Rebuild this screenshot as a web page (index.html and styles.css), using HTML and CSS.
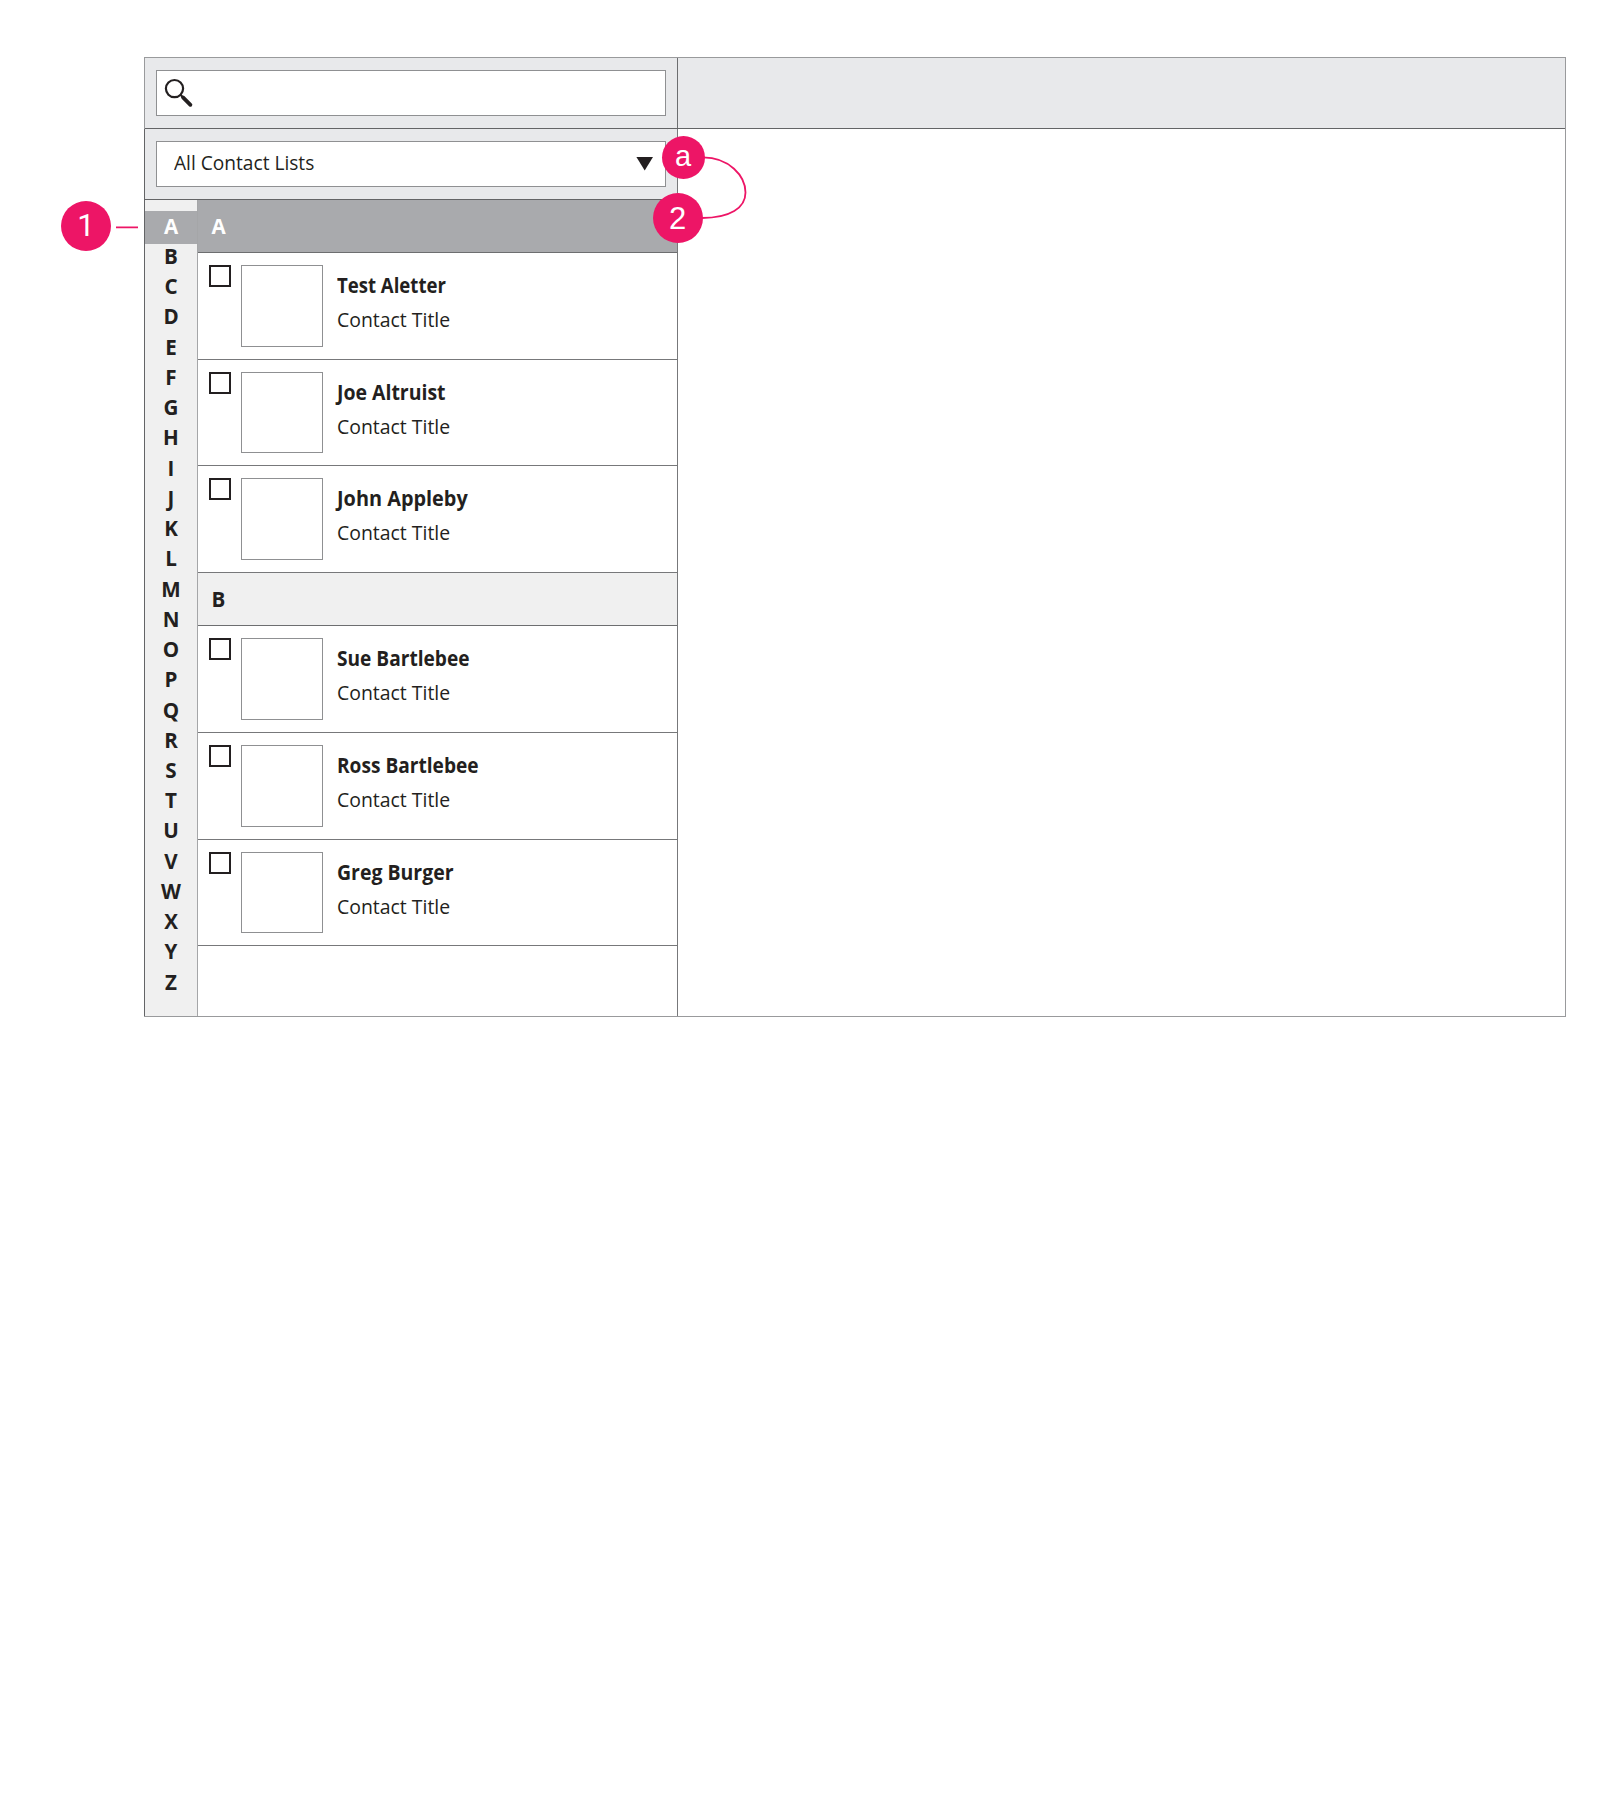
FILE: index.html
```html
<!DOCTYPE html>
<html lang="en">
<head>
<meta charset="utf-8">
<title>Contacts</title>
<link rel="stylesheet" href="styles.css">
</head>
<body>
<main class="app">
  <header class="topbar">
    <div class="search-cell">
      <div class="field">
        <svg class="search-icon" width="30" height="30" viewBox="0 0 30 30"><circle cx="10.5" cy="10.6" r="8.6" fill="none" stroke="#231f20" stroke-width="2.2"/><path d="M16.700 17l3 3" stroke="#231f20" stroke-width="2"/><path d="M19 19.400l7.400 7.400" stroke="#231f20" stroke-width="3.8" stroke-linecap="round"/></svg>
      </div>
    </div>
  </header>
  <div class="body">
    <section class="sidebar">
      <div class="filter-cell">
        <div class="field select"><span class="text">All Contact Lists</span><svg width="17" height="14" viewBox="0 0 17 14"><path d="M.4 0H17L8.700 13.400z" fill="#231f20"/></svg></div>
      </div>
      <div class="lists">
        <nav class="index"><b class="active">A</b><b>B</b><b>C</b><b>D</b><b>E</b><b>F</b><b>G</b><b>H</b><b>I</b><b>J</b><b>K</b><b>L</b><b>M</b><b>N</b><b>O</b><b>P</b><b>Q</b><b>R</b><b>S</b><b>T</b><b>U</b><b>V</b><b>W</b><b>X</b><b>Y</b><b>Z</b></nav>
        <div class="contacts">
          <h2 class="group current">A</h2>
          <article class="row"><i class="check"></i><i class="photo"></i><div class="info"><strong class="narrow">Test Aletter</strong><span class="text">Contact Title</span></div></article>
          <article class="row short"><i class="check"></i><i class="photo"></i><div class="info"><strong class="medium">Joe Altruist</strong><span class="text">Contact Title</span></div></article>
          <article class="row"><i class="check"></i><i class="photo"></i><div class="info"><strong class="wide">John Appleby</strong><span class="text">Contact Title</span></div></article>
          <h2 class="group">B</h2>
          <article class="row"><i class="check"></i><i class="photo"></i><div class="info"><strong>Sue Bartlebee</strong><span class="text">Contact Title</span></div></article>
          <article class="row"><i class="check"></i><i class="photo"></i><div class="info"><strong>Ross Bartlebee</strong><span class="text">Contact Title</span></div></article>
          <article class="row short"><i class="check"></i><i class="photo"></i><div class="info"><strong class="medium">Greg Burger</strong><span class="text">Contact Title</span></div></article>
        </div>
      </div>
    </section>
  </div>
</main>
<svg class="connectors" width="780" height="280" viewBox="0 0 780 280"><path d="M116 227.4H138M703 157.4C729 157.4 745.5 176 745.5 192.500C745.5 208 730 218 702 218" fill="none" stroke="#ed1566" stroke-width="1.8"/></svg>
<span class="marker one">1</span>
<span class="marker sub">a</span>
<span class="marker two">2</span>
</body>
</html>
```
FILE: styles.css
```css
* { box-sizing: border-box; }
body { margin: 0; padding: 57px 0 0 144px; width: 1622px; height: 1800px; background: #fff; color: #231f20; font: 20.6px/30px "Open Sans", "Noto Sans", sans-serif; position: relative; }
.app { width: 1422px; height: 960px; border: 1px solid #999a9c; }
.topbar { height: 71px; background: #e8e9eb; border-bottom: 1px solid #636466; }
.search-cell { width: 533px; height: 70px; padding: 12px 11px; border-right: 1px solid #6d6e70; }
.field { height: 46px; border: 1px solid #8f9092; background: #fff; }
.search-icon { display: block; margin: 7px 0 0 7px; }
.body { height: 887px; margin-left: -1px; border-left: 1px solid #636466; }
.sidebar { width: 533px; height: 100%; border-right: 1px solid #77787a; display: flex; flex-direction: column; }
.filter-cell { height: 71px; padding: 12px 11px; background: #e8e9eb; border-bottom: 1px solid #636466; }
.select { height: 46px; display: flex; align-items: center; justify-content: space-between; padding: 0 12px 0 17px; }
.text { display: block; white-space: nowrap; transform-origin: 0 50%; transform: scaleX(.943); }
.select .text { padding-bottom: 4px; transform: scaleX(.929); }
.lists { flex: 1; display: flex; }
.index { width: 53px; padding-top: 11px; background: #f0f0f0; border-right: 1px solid #a5a6a8; display: flex; flex-direction: column; }
.index b { flex: none; height: 30.236px; text-align: center; }
.index .active { height: 33px; margin-bottom: -3px; background: #a9aaad; color: #fff; }
.contacts { flex: 1; }
.group { height: 53px; margin: 0; padding: 11px 13.5px; border-bottom: 1px solid #6d6e70; background: #f0f0f0; font: inherit; font-weight: 700; }
.group.current { background: #a9aaad; color: #fff; }
.row { height: 107px; padding: 12px 11px; border-bottom: 1px solid #77787a; display: flex; }
.row.short { height: 106px; }
.check { width: 22px; height: 22px; border: 2px solid #231f20; }
.photo { width: 82px; height: 82px; margin-left: 10px; border: 1px solid #8f9092; }
.short .photo { height: 81px; }
.info { padding: 5px 0 0 13.5px; }
.info strong { display: block; height: 34px; transform-origin: 0 50%; transform: scaleX(.928); white-space: nowrap; }
.info .narrow { transform: scaleX(.902); }
.info .medium { transform: scaleX(.945); }
.info .wide { transform: scaleX(.965); }
.connectors { position: absolute; left: 0; top: 0; }
.marker { position: absolute; width: 50px; height: 50px; border-radius: 50%; background: #ed1566; color: #fff; text-align: center; font: 31px/50px "Liberation Sans", Arial, sans-serif; }
.one { left: 61px; top: 201px; font-family: Roboto, sans-serif; }
.sub { left: 661.5px; top: 136px; width: 43px; height: 43px; font-size: 29px; line-height: 40px; }
.two { left: 652.500px; top: 193px; line-height: 52px; }
```
